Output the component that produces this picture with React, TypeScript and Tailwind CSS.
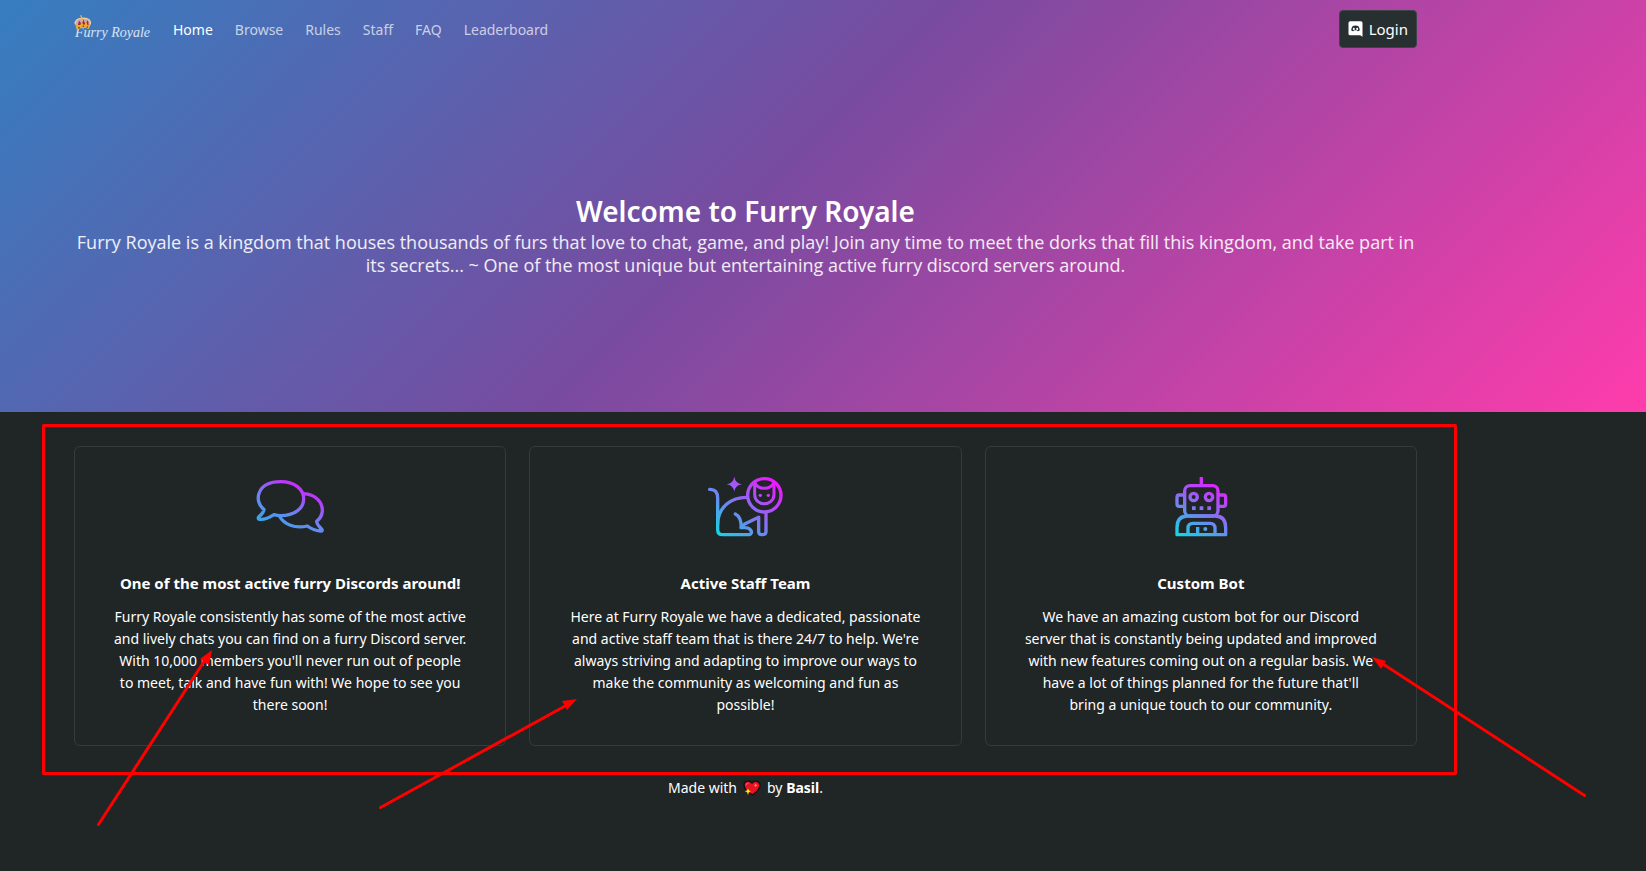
import React from "react";

const navLinks = ["Home", "Browse", "Rules", "Staff", "FAQ", "Leaderboard"];

function Crown() {
  return (
    <svg viewBox="0 0 54 48" className="absolute left-0 top-0 h-4 w-[18px]" aria-hidden="true">
      <path d="M5 31 C-1 15 12 8 26 10 C41 7 53 15 49 31 L44 41 C32 36 20 39 9 44 Z" fill="#c9a6b4" />
      <path d="M12 30 L15 17 L24 28 L27 12 L34 27 L42 15 L44 31 Z" fill="#b3202f" />
      <path d="M4 28 C2 16 12 9 26 10 C41 8 51 16 49 28" fill="none" stroke="#e8cfa5" strokeWidth="4" />
      <path d="M4 28 L9 45 C20 39 31 36 44 41 L50 28 L41 32 L37 20 L30 31 L22 20 L18 34 Z" fill="#e6b126" />
      <path d="M20 1 L25 12 V20" fill="none" stroke="#e4b75a" strokeWidth="4" />
      <circle cx="15" cy="38" r="2.5" fill="#b3202f" />
      <circle cx="28" cy="34" r="2.5" fill="#b3202f" />
      <circle cx="40" cy="36" r="2.5" fill="#b3202f" />
    </svg>
  );
}

function DiscordIcon() {
  return (
    <svg viewBox="0 0 44 48" className="h-4 w-[15px]" aria-hidden="true">
      <path d="M6 1 H38 Q43 1 43 6 V47 L36 43 H6 Q1 43 1 38 V6 Q1 1 6 1 Z" fill="#fff" />
      <path d="M14 15 Q22 12 30 15 Q35 21 35 28 Q31 31 28 31 L26 28 H18 L16 31 Q12 31 9 28 Q9 21 14 15 Z" fill="#272f30" />
      <ellipse cx="17" cy="24" rx="3" ry="3.5" fill="#fff" />
      <ellipse cx="27" cy="24" rx="3" ry="3.5" fill="#fff" />
    </svg>
  );
}

function ChatIcon() {
  return (
    <svg viewBox="0 0 300 240" className="h-20 w-[100px]" aria-hidden="true">
      <defs>
        <linearGradient id="chat" gradientUnits="userSpaceOnUse" x1="90" y1="190" x2="165" y2="45">
          <stop offset="0" stopColor="#36a9e8" />
          <stop offset="0.45" stopColor="#6c84f2" />
          <stop offset="1" stopColor="#d025fb" />
        </linearGradient>
      </defs>
      <g fill="none" stroke="url(#chat)" strokeWidth="10" strokeLinejoin="round" strokeLinecap="round">
        <path d="M72 134 C40 109 50 50 122 50 C164 50 191 73 191 101 C191 131 163 152 122 152 C115 152 108 151 102 149 C88 158 72 165 58 163 C53 162 54 157 58 154 C65 149 70 143 72 134 Z" />
        <path d="M190 86 C228 88 248 112 247 138 C246 151 240 161 230 169 C230 178 236 184 244 191 C249 196 246 199 241 198 C225 197 213 191 202 183 C164 192 132 178 118 153" />
      </g>
    </svg>
  );
}

function LionIcon() {
  return (
    <svg viewBox="0 0 300 240" className="h-20 w-[100px]" aria-hidden="true">
      <defs>
        <linearGradient id="lion" gradientUnits="userSpaceOnUse" x1="70" y1="215" x2="215" y2="40">
          <stop offset="0" stopColor="#12d8e4" />
          <stop offset="0.5" stopColor="#7f77f0" />
          <stop offset="1" stopColor="#e81cff" />
        </linearGradient>
      </defs>
      <g fill="none" stroke="url(#lion)" strokeWidth="10" strokeLinecap="round" strokeLinejoin="round">
        <path d="M44 73 C60 72 68 82 68 100 V194 Q68 209 84 209 H163 C176 205 168 188 150 188 H138 L149 177 L191 157 V201 Q192 209 200 209 Q213 209 213 200 V145" />
        <path d="M154 97 C112 97 68 124 68 178 M121 147 Q138 155 139 186" />
        <circle cx="208" cy="91" r="50" />
        <path d="M179 52 V88 C179 126 237 126 237 88 V52 Q229 70 208 70 Q187 70 179 52 Z" strokeWidth="9" />
      </g>
      <g fill="url(#lion)">
        <path d="M118 35 Q121 55 141 58 Q121 61 118 80 Q114 61 95 58 Q115 54 118 35 Z" />
        <circle cx="196" cy="91" r="5" />
        <circle cx="220" cy="91" r="5" />
      </g>
    </svg>
  );
}

function RobotIcon() {
  return (
    <svg viewBox="-28 0 300 240" className="h-20 w-[100px]" aria-hidden="true">
      <defs>
        <linearGradient id="robot" gradientUnits="userSpaceOnUse" x1="65" y1="220" x2="160" y2="45">
          <stop offset="0" stopColor="#12d8e4" />
          <stop offset="0.5" stopColor="#7f77f0" />
          <stop offset="1" stopColor="#e81cff" />
        </linearGradient>
      </defs>
      <g fill="none" stroke="url(#robot)" strokeWidth="10" strokeLinejoin="round">
        <rect x="73" y="62" width="100" height="91" rx="16" />
        <path d="M123 36 V62 M73 90 H56 Q50 90 50 98 V116 Q50 124 57 124 H73 M173 90 H190 Q196 90 196 98 V116 Q196 124 189 124 H173" />
        <path d="M82 153 H164 Q196 153 196 188 V209 H50 V188 Q50 153 82 153 Z" />
        <path d="M83 209 V190 Q83 175 98 175 H149 Q164 175 164 190 V209 M112 186 V207" />
        <circle cx="100" cy="96" r="11" />
        <circle cx="146" cy="96" r="11" />
      </g>
      <path d="M95 124 h11 v11 h-11 Z M118 124 h11 v11 h-11 Z M141 124 h11 v11 h-11 Z" fill="url(#robot)" />
      <circle cx="135" cy="192" r="6" fill="url(#robot)" />
    </svg>
  );
}

function Heart() {
  return (
    <svg viewBox="0 0 54 48" role="img" aria-label="love" className="h-4 w-[18px]">
      <path d="M28 45 C14 37 3 26 3 14 C4 1 20 0 27 9 C34 0 50 2 51 15 C51 27 40 37 28 45 Z" fill="#e81224" stroke="#111" strokeWidth="4" />
      <path d="M15 24 L18 31 L25 34 L18 37 L15 45 L12 37 L5 34 L12 31 Z" fill="#fff100" stroke="#7c3211" strokeWidth="1" />
      <path d="M38 10 L40 14 L44 16 L40 18 L38 22 L36 18 L32 16 L36 14 Z" fill="#ff9a1b" />
      <path d="M9 16 Q10 9 17 9" fill="none" stroke="#f0606a" strokeWidth="3" />
    </svg>
  );
}

const cards = [
  {
    icon: <ChatIcon />,
    title: "One of the most active furry Discords around!",
    text: "Furry Royale consistently has some of the most active and lively chats you can find on a furry Discord server. With 10,000 members you'll never run out of people to meet, talk and have fun with! We hope to see you there soon!",
  },
  {
    icon: <LionIcon />,
    title: "Active Staff Team",
    text: "Here at Furry Royale we have a dedicated, passionate and active staff team that is there 24/7 to help. We're always striving and adapting to improve our ways to make the community as welcoming and fun as possible!",
  },
  {
    icon: <RobotIcon />,
    title: "Custom Bot",
    text: "We have an amazing custom bot for our Discord server that is constantly being updated and improved with new features coming out on a regular basis. We have a lot of things planned for the future that'll bring\u00a0a unique touch to our community.",
  },
];

function Annotations() {
  return (
    <svg className="pointer-events-none absolute left-0 top-0 h-[871px] w-[1646px]" viewBox="0 0 1646 871" aria-hidden="true">
      <g fill="none" stroke="#f00" strokeWidth="3" strokeLinecap="round" strokeLinejoin="round">
        <rect x="43.5" y="425.5" width="1412" height="348" />
        <path d="M98.5 824.5 L205 660 M380.500 807.500 L567 705 M1584.5 795.500 L1383 664" />
      </g>
      <g fill="#f00">
        <path d="M212 650 L209 665 L200 659 Z" />
        <path d="M577 699 L567 710 L562 701 Z" />
        <path d="M1372 657 L1386 661 L1381 669 Z" />
      </g>
    </svg>
  );
}

export default function App() {
  return (
    <div className="relative min-h-screen overflow-hidden bg-[#202526] font-['Noto_Sans',sans-serif] text-sm leading-[22px] text-white">
      <header className="bg-[linear-gradient(135deg,#2b86c5_-7.5%,#784ba0_46.3%,#ff3cac_100%)]">
        <div className="max-w-[1417px] pl-[74px]">
          <nav className="flex h-[58px] items-center">
            <a href="#home" aria-label="Furry Royale home" className="relative mr-3 block h-7 w-19 whitespace-nowrap pt-1 pl-px font-['Liberation_Serif',serif] text-sm italic leading-7 text-white/80">
              <Crown />
              Furry Royale
            </a>
            <ul className="flex pt-px">
              {navLinks.map((link, i) => (
                <li key={link}>
                  <a href={`#${link.toLowerCase()}`} className={i === 0 ? "px-[11px] text-white" : "px-[11px] text-white/70"}>
                    {link}
                  </a>
                </li>
              ))}
            </ul>
            <button type="button" className="ml-auto flex h-[38px] items-center gap-[6px] rounded-[4px] border border-[#3b4547] bg-[#272f30] px-2 text-[15px]">
              <DiscordIcon />
              Login
            </button>
          </nav>
          <div className="flex h-[354px] flex-col items-center justify-center pb-0.5 text-center">
            <h1 className="text-[28px] font-semibold leading-10">Welcome to Furry Royale</h1>
            <p className="font-['Open_Sans',sans-serif] text-lg leading-[23px] text-white/90">
              Furry Royale is a kingdom that houses thousands of furs that love to chat, game, and play! Join any time to meet the dorks that fill this kingdom, and take part in its secrets... ~ One of the most unique but entertaining active furry discord servers around.
            </p>
          </div>
        </div>
      </header>
      <main className="max-w-[1417px] pl-[74px] pt-[34px]">
        <div className="grid grid-cols-3 gap-[23px]">
          {cards.map((card) => (
            <article key={card.title} className="flex flex-col items-center rounded-md border border-[#353a3b] px-9 pb-[29px] pt-[18px] text-center">
              {card.icon}
              <h2 className="mt-[27px] text-[15px] font-bold">{card.title}</h2>
              <p className="mt-3">{card.text}</p>
            </article>
          ))}
        </div>
      </main>
      <footer className="flex max-w-[1417px] items-center justify-center gap-[6px] pl-[74px] pt-[31px]">
        <span>Made with</span>
        <Heart />
        <span>by <strong>Basil</strong>.</span>
      </footer>
      <Annotations />
    </div>
  );
}
